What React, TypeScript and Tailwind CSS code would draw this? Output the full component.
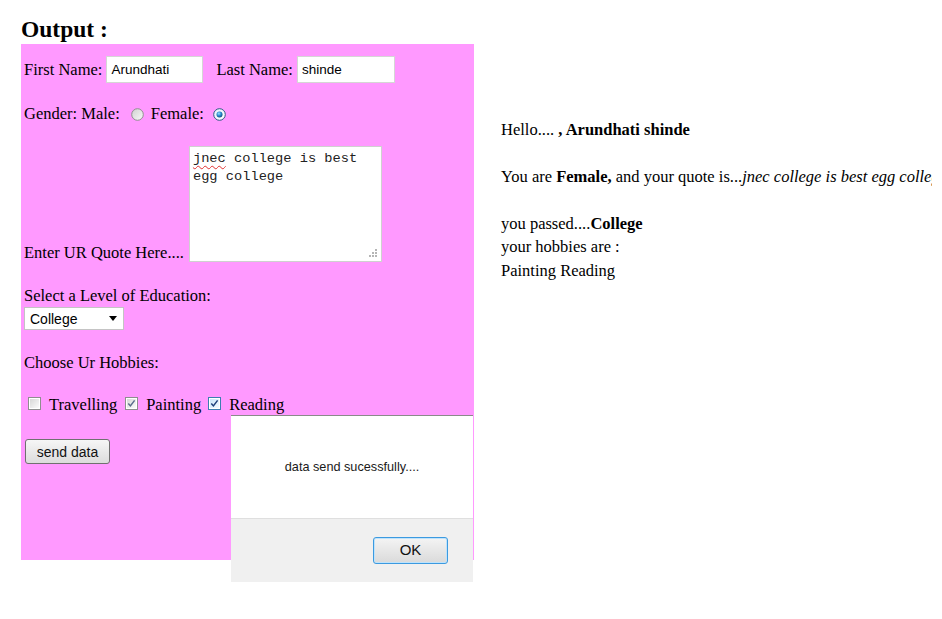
import React from "react";

const serif = { fontFamily: '"Liberation Serif", "Times New Roman", serif' };
const sans = { fontFamily: '"Liberation Sans", Arial, sans-serif' };
const mono = { fontFamily: '"Liberation Mono", "Courier New", monospace' };

function Radio({ checked }: { checked?: boolean }) {
  return (
    <svg width="13" height="13" viewBox="0 0 13 13" className="shrink-0">
      <defs>
        <linearGradient id={checked ? "rgc" : "rgu"} x1="0" y1="0" x2="1" y2="1">
          <stop offset="0" stopColor={checked ? "#e4f1fb" : "#cfcfcf"} />
          <stop offset="1" stopColor={checked ? "#ffffff" : "#fafafa"} />
        </linearGradient>
        <radialGradient id="rdot" cx="0.4" cy="0.35" r="0.7">
          <stop offset="0" stopColor="#9be0ff" />
          <stop offset="0.5" stopColor="#2a8dd0" />
          <stop offset="1" stopColor="#0d4a7a" />
        </radialGradient>
      </defs>
      <circle cx="6.5" cy="6.5" r="5.8" fill={`url(#${checked ? "rgc" : "rgu"})`} stroke={checked ? "#2b5a82" : "#8f8f8f"} strokeWidth="1" />
      {checked && <circle cx="6.5" cy="6.5" r="3" fill="url(#rdot)" />}
    </svg>
  );
}

function Check({ checked, hot }: { checked?: boolean; hot?: boolean }) {
  const id = hot ? "cbh" : checked ? "cbc" : "cbu";
  return (
    <svg width="13" height="13" viewBox="0 0 13 13" className="shrink-0">
      <defs>
        <linearGradient id={id} x1="0" y1="0" x2="1" y2="1">
          <stop offset="0" stopColor={hot ? "#c9e6fb" : "#d7d7d7"} />
          <stop offset="1" stopColor={hot ? "#f2faff" : "#fbfbfb"} />
        </linearGradient>
      </defs>
      <rect x="0.5" y="0.5" width="12" height="12" fill="#fff" stroke={hot ? "#3c7fb1" : "#8e8e8e"} />
      <rect x="2" y="2" width="9" height="9" fill={`url(#${id})`} />
      {checked && (
        <path d="M3.3 6.6 L5.4 8.9 L9.6 3.4" fill="none" stroke={hot ? "#1d3f7a" : "#5a6b8c"} strokeWidth="1.5" />
      )}
    </svg>
  );
}

export default function App() {
  return (
    <div className="relative w-[942px] h-[619px] bg-white overflow-hidden text-black">
      <div className="w-[932px] overflow-hidden pl-[21px] pt-[17px]">
        <div className="text-[23.5px] font-bold leading-[24px] h-[27px]" style={serif}>
          Output :
        </div>
        <div className="flex">
          <div className="w-[453px] h-[516px] shrink-0 bg-[#ff99ff] pl-[3px] flex flex-col text-[16.5px] leading-[18px]" style={serif}>
            {/* Row 1 */}
            <div className="mt-[12px] h-[27px] flex items-center">
              <span>First Name:</span>
              <div className="ml-[4px] w-[97px] h-[27px] bg-white border border-[#d6d6d6] flex items-center pl-[4px] text-[13.5px]" style={sans}>
                Arundhati
              </div>
              <span className="ml-[13px]">Last Name:</span>
              <div className="ml-[4px] w-[98px] h-[27px] bg-white border border-[#d6d6d6] flex items-center pl-[4px] text-[13.5px]" style={sans}>
                shinde
              </div>
            </div>
            {/* Row 2 */}
            <div className="mt-[21px] h-[20px] flex items-center">
              <span>Gender: Male:</span>
              <span className="ml-[11px]"><Radio /></span>
              <span className="ml-[7px]">Female:</span>
              <span className="ml-[9px]"><Radio checked /></span>
            </div>
            {/* Row 3 */}
            <div className="mt-[22px] flex items-end">
              <span className="leading-[18px]">Enter UR Quote Here....</span>
              <div className="ml-[5px] relative w-[193px] h-[116px] bg-white border border-[#d0d0d0] pl-[3px] pt-[3px] text-[13.7px] leading-[17.7px] text-[#222]" style={mono}>
                <div>
                  <span className="underline decoration-wavy decoration-[#e03030] decoration-1 underline-offset-[3px]">jnec</span> college is best
                </div>
                <div>egg college</div>
                <svg className="absolute right-[3px] bottom-[3px]" width="10" height="10" viewBox="0 0 10 10">
                  <g fill="#b5b5b5">
                    <rect x="7" y="1" width="2" height="2" />
                    <rect x="4" y="4" width="2" height="2" />
                    <rect x="7" y="4" width="2" height="2" />
                    <rect x="1" y="7" width="2" height="2" />
                    <rect x="4" y="7" width="2" height="2" />
                    <rect x="7" y="7" width="2" height="2" />
                  </g>
                </svg>
              </div>
            </div>
            {/* Row 4 */}
            <div className="mt-[25px]">Select a Level of Education:</div>
            <div className="mt-[2px] w-[100px] h-[23px] bg-white border border-[#c4c4c4] flex items-center justify-between pl-[5px] pr-[6px] text-[14px]" style={sans}>
              <span>College</span>
              <svg width="8" height="5" viewBox="0 0 8 5">
                <path d="M0 0 H8 L4 5 Z" fill="#000" />
              </svg>
            </div>
            {/* Row 5 */}
            <div className="mt-[24px]">Choose Ur Hobbies:</div>
            {/* Row 6 */}
            <div className="mt-[24px] h-[18px] flex items-start">
              <span className="ml-[4px] mt-[1px]"><Check /></span>
              <span className="ml-[8px]">Travelling</span>
              <span className="ml-[8px] mt-[1px]"><Check checked /></span>
              <span className="ml-[8px]">Painting</span>
              <span className="ml-[7px] mt-[1px]"><Check checked hot /></span>
              <span className="ml-[8px]">Reading</span>
            </div>
            {/* Row 7 */}
            <div className="mt-[25px] ml-[1px] w-[85px] h-[25px] rounded-[3px] border border-[#707070] bg-gradient-to-b from-[#f6f6f6] to-[#dcdcdc] flex items-center justify-center text-[14px] text-[#111]" style={sans}>
              send data
            </div>
          </div>
          <div className="ml-[27px] pt-[73.7px] text-[16.5px] leading-[23.5px] whitespace-nowrap" style={serif}>
            <div>
              Hello.... <b>, Arundhati shinde</b>
            </div>
            <div className="h-[23.5px]" />
            <div>
              You are <b>Female,</b> and your quote is...<i>jnec college is best egg college</i>
            </div>
            <div className="h-[23.5px]" />
            <div>
              you passed....<b>College</b>
            </div>
            <div>your hobbies are :</div>
            <div>Painting Reading</div>
          </div>
        </div>
      </div>

      {/* Dialog */}
      <div className="absolute left-[231px] top-[415px] w-[242px] h-[167px] flex flex-col" style={sans}>
        <div className="h-[103px] bg-white border-t border-[#8a8a8a] flex items-center justify-center pt-[1px] text-[12.7px] text-[#1a1a1a]">
          data send sucessfully....
        </div>
        <div className="flex-1 bg-[#f0f0f0] border-t border-[#dfdfdf] flex items-center justify-end pr-[25px]">
          <div className="w-[75px] h-[27px] rounded-[3px] border border-[#3c9ae0] bg-gradient-to-b from-[#f4f4f4] to-[#dadada] shadow-[inset_0_0_0_1px_#bfe3fb] flex items-center justify-center text-[15px] text-[#111]">
            OK
          </div>
        </div>
      </div>
    </div>
  );
}
